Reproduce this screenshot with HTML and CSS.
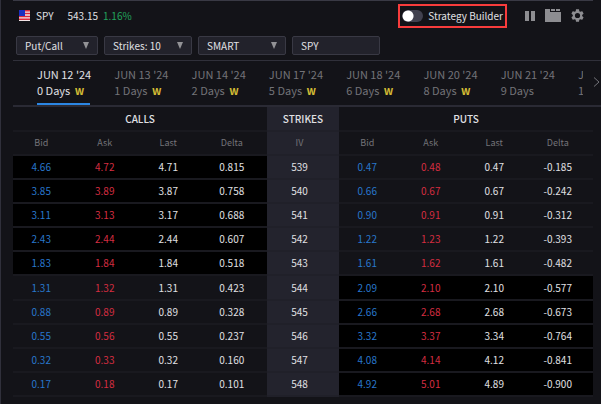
FILE: index.html
```
<!DOCTYPE html>
<html lang="en">
<head>
  <meta charset="UTF-8" />
  <meta name="viewport" content="width=device-width, initial-scale=1.0" />
  <title>SPY - Option Chain</title>
  <link rel="stylesheet" href="styles.css">
</head>
<body>
  <main class="panel">
    <header class="topbar">
      <svg class="flag" viewBox="0 0 11 11" aria-hidden="true">
        <rect width="11" height="11" fill="#f2e4e6" />
        <path d="M0 .8h11M0 3.6h11M0 6.4h11M0 9.2h11" stroke="#e0283c" stroke-width="1.5" />
        <rect width="6" height="6" fill="#1d2fc0" />
      </svg>
      <span class="symbol">SPY</span>
      <span class="price">543.15</span>
      <span class="change">1.16%</span>
      <label class="builder">
        <input type="checkbox" class="toggle">
        Strategy Builder
      </label>
      <div class="tools">
        <button type="button" aria-label="Columns">
          <svg width="10" height="10" viewBox="0 0 10 10"><path d="M0 0h4v10H0zM6 0h4v10H6z" /></svg>
        </button>
        <button type="button" aria-label="Tabs">
          <svg width="16" height="13" viewBox="0 0 16 13"><path d="M0 0h5v3h11v10H0zM6 0h4v2H6zM11 0h4v2h-4z" /></svg>
        </button>
        <button type="button" aria-label="Settings">
          <svg width="13" height="13" viewBox="2 2 20 20"><path d="M19.14 12.94c.04-.3.06-.61.06-.94 0-.32-.02-.64-.07-.94l2.03-1.58c.18-.14.23-.41.12-.61l-1.92-3.32c-.12-.22-.37-.29-.59-.22l-2.39.96c-.5-.38-1.03-.7-1.62-.94l-.36-2.54c-.04-.24-.24-.41-.48-.41h-3.84c-.24 0-.43.17-.47.41l-.36 2.54c-.59.24-1.13.57-1.62.94l-2.39-.96c-.22-.08-.47 0-.59.22L2.74 8.87c-.12.21-.08.47.12.61l2.03 1.58c-.05.3-.09.63-.09.94s.02.64.07.94l-2.03 1.58c-.18.14-.23.41-.12.61l1.92 3.32c.12.22.37.29.59.22l2.39-.96c.5.38 1.03.7 1.62.94l.36 2.54c.05.24.24.41.48.41h3.84c.24 0 .44-.17.47-.41l.36-2.54c.59-.24 1.13-.56 1.62-.94l2.39.96c.22.08.47 0 .59-.22l1.92-3.32c.12-.22.07-.47-.12-.61l-2.01-1.58zM12 16a4 4 0 1 1 0-8 4 4 0 0 1 0 8z" /></svg>
        </button>
      </div>
    </header>

    <form class="filters">
      <div class="picker narrow">
        <select aria-label="View"><option>Put/Call</option></select>
      </div>
      <div class="picker">
        <select aria-label="Strikes"><option>Strikes: 10</option></select>
      </div>
      <div class="picker">
        <select aria-label="Exchange"><option>SMART</option></select>
      </div>
      <input type="text" aria-label="Trading class" value="SPY">
    </form>

    <nav class="expiries">
      <div class="tabs">
        <button type="button" class="tab active">JUN 12 '24<span>0 Days <b>w</b></span></button>
        <button type="button" class="tab">JUN 13 '24<span>1 Days <b>w</b></span></button>
        <button type="button" class="tab">JUN 14 '24<span>2 Days <b>w</b></span></button>
        <button type="button" class="tab">JUN 17 '24<span>5 Days <b>w</b></span></button>
        <button type="button" class="tab">JUN 18 '24<span>6 Days <b>w</b></span></button>
        <button type="button" class="tab">JUN 20 '24<span>8 Days <b>w</b></span></button>
        <button type="button" class="tab">JUN 21 '24<span>9 Days</span></button>
        <button type="button" class="tab">JUN 24 '24<span>12 Days</span></button>
      </div>
      <button type="button" class="next" aria-label="More dates">
        <svg width="7" height="10" viewBox="0 0 7 10"><path d="M1 .5 6 5 1 9.5" /></svg>
      </button>
    </nav>

    <table class="chain">
      <colgroup>
        <col span="4"><col class="strike-col"><col span="4">
      </colgroup>
      <thead>
        <tr class="sides">
          <th colspan="4">CALLS</th>
          <th class="strike">STRIKES</th>
          <th colspan="4">PUTS</th>
        </tr>
        <tr class="fields">
          <th>Bid</th><th>Ask</th><th>Last</th><th>Delta</th>
          <th class="strike">IV</th>
          <th>Bid</th><th>Ask</th><th>Last</th><th>Delta</th>
        </tr>
      </thead>
      <tbody id="rows"></tbody>
    </table>
  </main>

  <script>
    const lastPrice = 543.15;

    // call bid, ask, last, delta, strike, put bid, ask, last, delta
    const chain = [
      ["4.66", "4.72", "4.71", "0.815", 539, "0.47", "0.48", "0.47", "-0.185"],
      ["3.85", "3.89", "3.87", "0.758", 540, "0.66", "0.67", "0.67", "-0.242"],
      ["3.11", "3.13", "3.17", "0.688", 541, "0.90", "0.91", "0.91", "-0.312"],
      ["2.43", "2.44", "2.44", "0.607", 542, "1.22", "1.23", "1.22", "-0.393"],
      ["1.83", "1.84", "1.84", "0.518", 543, "1.61", "1.62", "1.61", "-0.482"],
      ["1.31", "1.32", "1.31", "0.423", 544, "2.09", "2.10", "2.10", "-0.577"],
      ["0.88", "0.89", "0.89", "0.328", 545, "2.66", "2.68", "2.68", "-0.673"],
      ["0.55", "0.56", "0.55", "0.237", 546, "3.32", "3.37", "3.34", "-0.764"],
      ["0.32", "0.33", "0.32", "0.160", 547, "4.08", "4.14", "4.12", "-0.841"],
      ["0.17", "0.18", "0.17", "0.101", 548, "4.92", "5.01", "4.89", "-0.900"]
    ];
    const columns = ["bid", "ask", "last", "delta", "strike", "bid", "ask", "last", "delta"];

    document.getElementById("rows").innerHTML = chain.map((row) => {
      const callItm = row[4] < lastPrice;
      const cells = row.map((value, i) => {
        const itm = (i < 4 && callItm) || (i > 4 && !callItm);
        return `<td class="${columns[i]}${itm ? " itm" : ""}">${value}</td>`;
      });
      return `<tr>${cells.join("")}</tr>`;
    }).join("");
  </script>
</body>
</html>
```
FILE: styles.css
```
* {
  box-sizing: border-box;
}
body {
  margin: 0;
  background-color: #131318;
  color: #e0e0e4;
  font-family: "Noto Sans CJK SC", "Noto Sans", sans-serif;
  font-size: 10px;
  line-height: 16px;
}
button, select, input {
  font: inherit;
  color: inherit;
}
button {
  padding: 0;
  border: none;
  background: none;
  cursor: pointer;
}
.panel {
  min-height: 100vh;
  padding: 0 8px 0 12px;
  border-left: 1px solid #30303b;
}

/* symbol line */
.topbar {
  display: flex;
  align-items: center;
  height: 32px;
  border-top: 1px solid #393944;
  padding: 0 9px 2px 6px;
}
.flag {
  width: 11px;
  height: 11px;
  margin-right: 6px;
}
.symbol {
  margin-right: 14px;
}
.price {
  margin-right: 5px;
}
.change {
  color: #22a35c;
}
.builder {
  display: flex;
  align-items: center;
  gap: 5px;
  height: 24px;
  margin-left: auto;
  padding: 0 2px;
  border: 2px solid #f83c3c;
}
.toggle {
  appearance: none;
  width: 21px;
  height: 12px;
  margin: 0;
  border-radius: 6px;
  background: radial-gradient(circle at 6px 6px, #fff 5px, transparent 6px) #41414f;
}
.toggle:checked {
  background: radial-gradient(circle at 15px 6px, #fff 5px, transparent 6px) #2b86e3;
}
.tools {
  display: flex;
  align-items: center;
  gap: 10px;
  margin-left: 18px;
}
.tools svg {
  display: block;
  fill: #8d8d91;
}

/* drop-downs */
.filters {
  display: flex;
  gap: 6px;
  padding: 4px 3px 5px;
}
.picker {
  position: relative;
  width: 88px;
}
.picker.narrow {
  width: 82px;
}
.picker::after {
  content: "";
  position: absolute;
  right: 9px;
  top: 6px;
  border: 3px solid transparent;
  border-top: 7px solid #929296;
  border-bottom: none;
  pointer-events: none;
}
.filters select, .filters input {
  display: block;
  appearance: none;
  width: 100%;
  height: 19px;
  padding: 0 8px;
  border: 1px solid #393944;
  border-radius: 2px;
  background-color: #22222b;
}
.filters input {
  width: 88px;
}

/* expiry dates */
.expiries {
  display: flex;
  align-items: center;
  height: 47px;
  border-top: 1px solid #30303a;
  border-bottom: 2px solid #2a2a34;
  margin-right: -8px;
}
.tabs {
  display: flex;
  flex: 1;
  gap: 24px;
  height: 44px;
  min-width: 0;
  padding: 0 5px 0 24px;
  overflow: hidden;
}
.tab {
  flex: 0 0 calc(100% / 7 - 24px);
  min-width: 0;
  border-bottom: 2px solid transparent;
  color: #737378;
  font-size: 11px;
  line-height: 16px;
  text-align: left;
  white-space: nowrap;
}
.tab.active {
  border-bottom-color: #2b86e3;
  color: #e0e0e4;
}
.tab span {
  display: block;
}
.tab b {
  margin-left: 2px;
  color: #d3bc35;
}
.next {
  width: 18px;
  padding-left: 8px;
}
.next path {
  fill: none;
  stroke: #737378;
}

/* option chain */
.chain {
  width: 100%;
  height: calc(100vh - 114px);
  table-layout: fixed;
  border-collapse: collapse;
}
.strike-col {
  width: 72px;
}
.chain th, .chain td {
  padding: 0 7px 0 0;
  border-bottom: 2px solid #19191f;
  font-weight: 400;
  text-align: center;
}
.chain th {
  height: 24px;
}
.chain .fields th {
  color: #737378;
  font-size: 9px;
}
.chain .sides th {
  padding: 0;
  font-weight: 500;
}
.chain .strike {
  background-color: #23232d;
  border-bottom-color: #202029;
}
.chain .itm {
  background-color: #000;
}
.chain .bid {
  color: #2877cc;
}
.chain .ask {
  color: #d42d40;
}
```
